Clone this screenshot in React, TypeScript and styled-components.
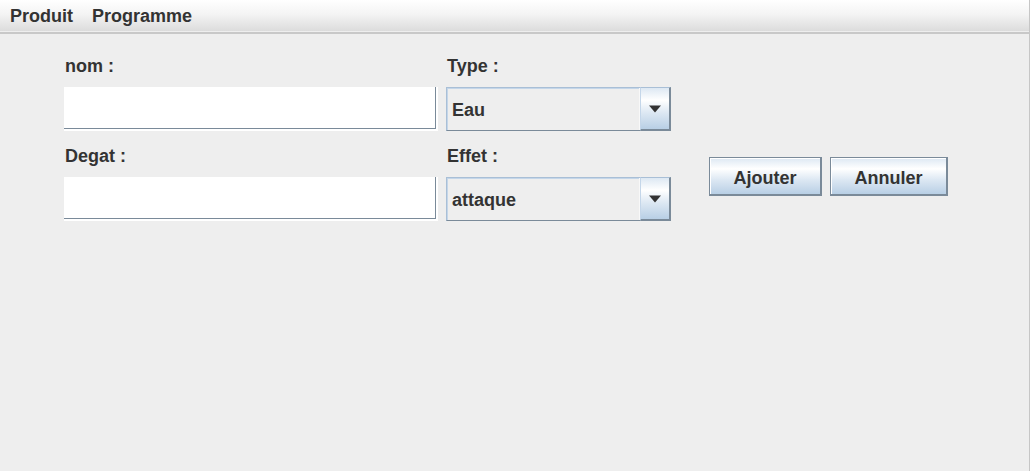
import React from "react";
import styled, { createGlobalStyle } from "styled-components";

const GlobalStyle = createGlobalStyle`
  html, body {
    margin: 0;
    padding: 0;
    background: #eeeeee;
  }
  body {
    font-family: "Liberation Sans", Arial, sans-serif;
    color: #333333;
  }
`;

const metalGradient = "linear-gradient(to bottom, #dde8f3 0%, #ffffff 30%, #dde8f3 60%, #b8cfe5 100%)";

interface IComboBox {
  value: string;
}

const ComboBox = ({ value }: IComboBox) => (
  <Combo>
    <ComboValue>{value}</ComboValue>
    <ArrowButton>
      <svg width="14" height="8" viewBox="0 0 14 8">
        <path d="M1 0.5 H13 L7 7.5 Z" fill="#333333" />
      </svg>
    </ArrowButton>
  </Combo>
);

const App = () => {
  return (
    <>
      <GlobalStyle />
      <Frame>
        <MenuBar>
          <MenuItem>Produit</MenuItem>
          <MenuItem>Programme</MenuItem>
        </MenuBar>
        <Form>
          <Column $width={374}>
            <Label>nom :</Label>
            <TextField />
            <Label $spaced>Degat :</Label>
            <TextField />
          </Column>
          <Column $width={225}>
            <Label>Type :</Label>
            <ComboBox value="Eau" />
            <Label $spaced>Effet :</Label>
            <ComboBox value="attaque" />
          </Column>
          <Actions>
            <Button $width={113}>Ajouter</Button>
            <Button $width={118}>Annuler</Button>
          </Actions>
        </Form>
      </Frame>
    </>
  );
};

const Frame = styled.div`
  width: 1029px;
  height: 100vh;
  border-right: 1px solid #c6c6c6;
  background: #eeeeee;
`;

const MenuBar = styled.div`
  height: 31px;
  display: flex;
  align-items: center;
  padding-left: 1px;
  background: linear-gradient(to bottom, #ffffff 0%, #f4f4f4 45%, #dcdcdc 100%);
  border-bottom: 1px solid #eeeeee;
  box-shadow: 0 2px 0 #c8c8c8;
  margin-bottom: 2px;
`;

const MenuItem = styled.div`
  padding: 0 10px 0 9px;
  font-size: 18px;
  font-weight: bold;
  line-height: 20px;
  margin-top: 1px;
  &:last-child {
    padding-left: 9px;
  }
`;

const Form = styled.div`
  display: flex;
  align-items: flex-start;
  padding: 22px 0 0 64px;
`;

const Column = styled.div<{ $width: number }>`
  display: flex;
  flex-direction: column;
  width: ${({ $width }) => $width}px;
  margin-right: 8px;
  &:nth-child(2) {
    margin-right: 38px;
  }
`;

const Label = styled.div<{ $spaced?: boolean }>`
  height: 20px;
  line-height: 20px;
  font-size: 18px;
  font-weight: bold;
  padding-left: 1px;
  margin-top: ${({ $spaced }) => ($spaced ? "15px" : "0")};
  margin-bottom: 11px;
`;

const TextField = styled.div`
  height: 44px;
  background: #ffffff;
  box-shadow: inset -2px -2px 0 #ffffff, inset -3px -3px 0 #7a8a99;
`;

const Combo = styled.div`
  height: 44px;
  box-sizing: border-box;
  display: flex;
  border: 1px solid;
  border-color: #a9bfd6 #7a8a99 #7a8a99 #a9bfd6;
  box-shadow: inset 1px 1px 0 #c4d6e9;
  background: #eeeeee;
`;

const ComboValue = styled.div`
  flex: 1;
  display: flex;
  align-items: center;
  padding: 2px 0 0 5px;
  font-size: 18px;
  font-weight: bold;
  border-right: 1px solid #f8f8f8;
`;

const ArrowButton = styled.div`
  width: 28px;
  display: flex;
  align-items: center;
  justify-content: center;
  margin: -1px -1px -1px 0;
  background: ${metalGradient};
  border-left: 1px solid #c4d6e9;
  border-right: 2px solid #7a8a99;
  border-bottom: 2px solid #7a8a99;
  border-top: 1px solid #a9bfd6;
`;

const Actions = styled.div`
  display: flex;
  gap: 8px;
  margin-top: 101px;
`;

const Button = styled.button<{ $width: number }>`
  width: ${({ $width }) => $width}px;
  height: 39px;
  box-sizing: border-box;
  padding: 4px 0 0;
  font-family: "Liberation Sans", Arial, sans-serif;
  font-size: 18px;
  font-weight: bold;
  color: #333333;
  background: ${metalGradient};
  border: 1px solid #7a8a99;
  border-right-width: 2px;
  border-bottom-width: 2px;
  box-shadow: inset 1px 1px 0 #ffffff;
  cursor: pointer;
`;

export default App;
